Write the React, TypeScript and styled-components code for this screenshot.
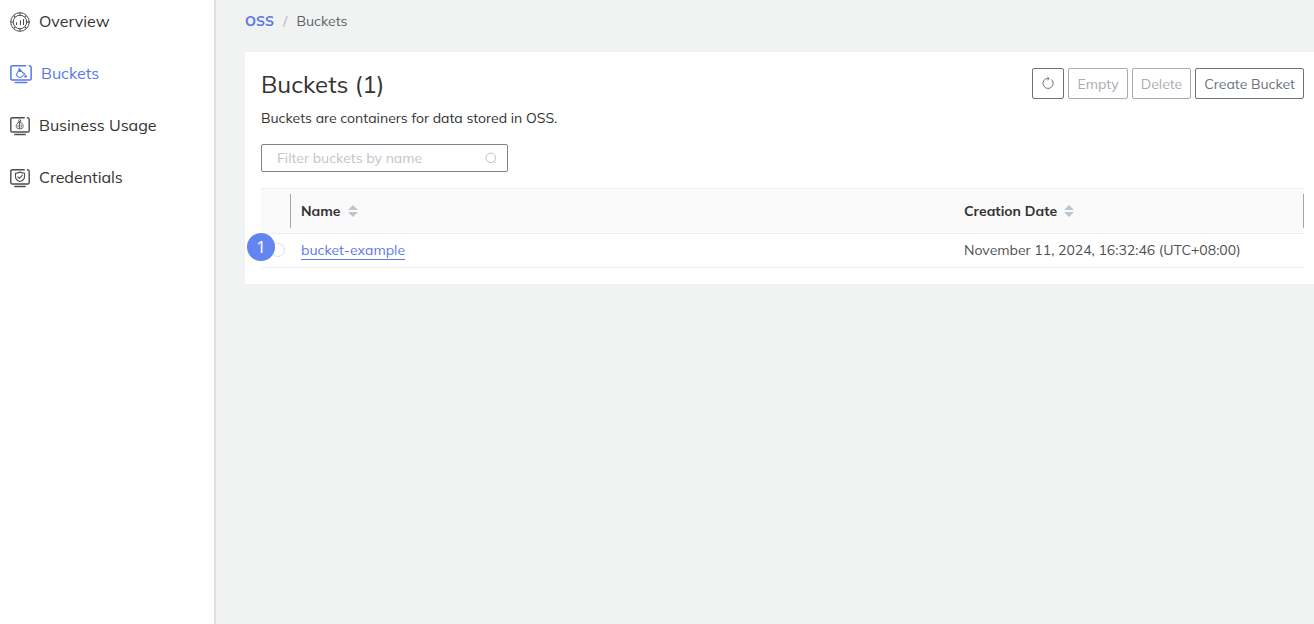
import React, { useState } from "react";
import styled, { createGlobalStyle } from "styled-components";

const color = {
  text: "#333333",
  icon: "#4c4c4c",
  cell: "#4e5054",
  muted: "#606266",
  primary: "#5a78e6",
  line: "#ebeef5",
  control: "#6b747d",
  disabled: "#a8abb2",
  placeholder: "#c0c4cc",
};

const GlobalStyle = createGlobalStyle`
  *, *::before, *::after { box-sizing: border-box; }
  body {
    margin: 0;
    background: #f1f3f2;
    color: ${color.text};
    font: 14px/20px Mulish, Muli, "Noto Sans", sans-serif;
  }
  button, input { font: inherit; }
`;

const Layout = styled.div`
  display: flex;
  min-height: 100vh;
`;

const Sidebar = styled.nav`
  flex: 0 0 216px;
  background: #fff;
  border-right: 2px solid #dddfe0;
`;

const Menu = styled.ul`
  list-style: none;
  margin: 0;
  padding: 0 10px;
`;

const MenuLink = styled.a<{ $active?: boolean }>`
  display: flex;
  align-items: center;
  gap: 9px;
  height: 44px;
  margin-bottom: 8px;
  font-size: 16px;
  text-decoration: none;
  color: ${(p) => (p.$active ? color.primary : color.text)};

  svg {
    color: ${(p) => (p.$active ? color.primary : color.icon)};
  }
`;

const MenuLabel = styled.span`
  padding-bottom: 2px;
`;

const MenuIcon = styled.svg`
  flex: none;
  fill: none;
  stroke: currentColor;
  stroke-linecap: round;
  stroke-linejoin: round;
`;

const Main = styled.main`
  flex: 1;
  min-width: 0;
  padding-left: 29px;
`;

const Breadcrumb = styled.nav`
  display: flex;
  align-items: center;
  gap: 9px;
  height: 42px;
  margin-bottom: 10px;
  color: ${color.muted};
`;

const Crumb = styled.a`
  color: ${color.primary};
  font-weight: 700;
  text-decoration: none;
`;

const Slash = styled.span`
  color: ${color.placeholder};
  font-weight: 700;
`;

const Panel = styled.section`
  padding: 16px 10px 16px 16px;
  background: #fff;
`;

const PanelHeader = styled.header`
  display: flex;
  justify-content: space-between;
  align-items: flex-start;
  margin-bottom: 8px;
`;

const Title = styled.h1`
  margin: 0;
  font-size: 24px;
  line-height: 32px;
  font-weight: 400;
`;

const Actions = styled.div`
  display: flex;
  gap: 4px;
`;

const Button = styled.button`
  display: inline-flex;
  align-items: center;
  justify-content: center;
  height: 31px;
  min-width: 32px;
  padding: 0 8px;
  background: #fff;
  border: 1px solid ${color.control};
  border-radius: 2px;
  color: ${color.control};
  cursor: pointer;
  &:disabled {
    border-color: ${color.disabled};
    color: ${color.disabled};
    cursor: not-allowed;
  }
`;

const Description = styled.p`
  margin: 0 0 16px;
`;

const SearchBox = styled.label`
  display: flex;
  align-items: center;
  width: 247px;
  height: 28px;
  margin-bottom: 16px;
  padding: 0 10px 0 15px;
  border: 1px solid #808488;
  border-radius: 2px;
  color: ${color.placeholder};
`;

const SearchInput = styled.input`
  flex: 1;
  min-width: 0;
  padding: 0;
  border: 0;
  outline: 0;
  background: transparent;
  color: ${color.text};
  &::placeholder {
    color: ${color.placeholder};
    opacity: 1;
  }
`;

const Table = styled.table`
  width: 100%;
  table-layout: fixed;
  border-collapse: separate;
  border-spacing: 0;
  text-align: left;
`;

const SelectCol = styled.col`
  width: 30px;
`;

const DateCol = styled.col`
  width: 350px;
`;

const HeadCell = styled.th`
  height: 46px;
  padding: 0;
  background: #fafafa;
  border: solid ${color.line};
  border-width: 1px 0;
  font-weight: 700;
`;

const HeadInner = styled.div<{ $divider?: boolean }>`
  display: flex;
  align-items: center;
  gap: 7px;
  height: 34px;
  padding-left: 10px;
  border-right: ${(p) => (p.$divider ? "1px solid #a4a6aa" : "0")};
`;

const SortButton = styled.button`
  display: flex;
  padding: 0;
  border: 0;
  background: transparent;
  color: ${color.placeholder};
  cursor: pointer;
`;

const Cell = styled.td`
  height: 34px;
  padding: 0 0 1px 10px;
  border-bottom: 1px solid ${color.line};
  color: ${color.cell};
`;

const SelectCell = styled(Cell)`
  position: relative;
`;

const Radio = styled.input`
  appearance: none;
  display: block;
  width: 14px;
  height: 14px;
  margin: 0;
  border: 1px solid #dcdfe6;
  border-radius: 50%;
  background: #fff;
  &:checked {
    border: 4px solid ${color.primary};
  }
`;

const StepBadge = styled.span`
  position: absolute;
  top: -1px;
  left: -14px;
  width: 28px;
  height: 28px;
  border-radius: 50%;
  background: #6485f0;
  color: #fff;
  font-family: "Noto Sans", sans-serif;
  font-size: 17px;
  line-height: 28px;
  text-align: center;
`;

const BucketLink = styled.a`
  border-bottom: 1px solid ${color.primary};
  color: ${color.primary};
  text-decoration: none;
`;

const Monitor = ({ width, children }: { width: number; children: React.ReactNode }) => (
  <MenuIcon width={width} height="20" viewBox="0 0 20 20" preserveAspectRatio="none" aria-hidden="true">
    <path strokeWidth="1.4" d="M14.2 1.7H2.6Q.8 1.7.8 3.4v11Q.8 16 2.6 16h14.8q1.8 0 1.8-1.6v-11q0-1.6-1.7-1.7" />
    <path strokeWidth="1.4" d="M4.8 18.5h10.4" />
    {children}
  </MenuIcon>
);

const OverviewIcon = () => (
  <MenuIcon width="20" height="20" viewBox="0 0 20 20" aria-hidden="true">
    <circle cx="10" cy="10" r="9.3" strokeWidth="1" />
    <circle cx="10" cy="10" r="6.8" strokeWidth="1" />
    <path
      strokeWidth="1.1"
      strokeLinecap="butt"
      d="M10 1v2.2M10 16.8V19M1 10h2.2M16.8 10H19M3.7 3.7l1.5 1.5M14.8 14.8l1.5 1.5M3.7 16.3l1.5-1.5M14.8 5.2l1.5-1.5"
    />
    <path strokeWidth="1" strokeLinecap="butt" d="M6.5 10.3V13M10.5 8.3V13M13.5 7v6" />
  </MenuIcon>
);

const BucketsIcon = () => (
  <Monitor width={22}>
    <path strokeWidth="1" d="M8.4 5.8l5 4.2-3.6 3.3q-1 .6-1.9-.1l-1.7-1.6q-.8-.9 0-1.8z" />
    <path strokeWidth="1" fill="currentColor" d="M8.3 4.4v3.2l2.2-.2zM14.1 11.2q1.6 1.8 0 2-1.4-.2 0-2z" />
  </Monitor>
);

const UsageIcon = () => (
  <Monitor width={20}>
    <circle cx="9.7" cy="4.6" r="1" strokeWidth=".8" />
    <path strokeWidth=".8" d="M8.3 6.3h2.8q2.4 2.3 2.2 4.3-.5 2.4-3.6 2.4t-3.6-2.4q-.2-2 2.2-4.3z" />
    <path strokeWidth="1" d="M9.7 6v6.5" />
    <path strokeWidth=".7" d="M8 9v2M11.4 9v2" />
  </Monitor>
);

const CredentialsIcon = () => (
  <Monitor width={20}>
    <path strokeWidth="1.1" d="M10 4q2 1.2 4.5 1.2v3.5q0 3.3-4.5 4.8-4.5-1.5-4.5-4.8V5.2Q8 5.2 10 4z" />
    <path strokeWidth="1.1" d="M7.8 8.9l1.5 1.5 3-3" />
  </Monitor>
);

const RefreshIcon = () => (
  <svg width="14" height="16" viewBox="0 0 14 16" fill="none" stroke="currentColor" aria-hidden="true">
    <path d="M10.3 3.4A5.1 5.1 0 1 1 4.4 3L7.6 2.4" />
    <path d="M6.3.6l1.6 1.7-1.1 2" />
  </svg>
);

const SearchIcon = () => (
  <svg width="12" height="12" viewBox="0 0 12 12" fill="none" stroke="currentColor" aria-hidden="true">
    <circle cx="5.8" cy="5.8" r="4.8" />
    <path d="M9 9.2l2 2" />
  </svg>
);

const Sort = ({ column }: { column: string }) => (
  <SortButton type="button" aria-label={`Sort by ${column}`}>
    <svg width="10" height="12" viewBox="0 0 10 12" fill="currentColor" aria-hidden="true">
      <path d="M5 0l5 5H0zM5 12l5-5H0z" />
    </svg>
  </SortButton>
);

const menu = [
  { label: "Overview", Icon: OverviewIcon },
  { label: "Buckets", Icon: BucketsIcon, active: true },
  { label: "Business Usage", Icon: UsageIcon },
  { label: "Credentials", Icon: CredentialsIcon },
];

const buckets = [{ name: "bucket-example", created: "November 11, 2024, 16:32:46 (UTC+08:00)" }];

export default function App() {
  const [filter, setFilter] = useState("");
  const [selected, setSelected] = useState("");
  const rows = buckets.filter((b) => b.name.includes(filter));

  return (
    <Layout>
      <GlobalStyle />
      <Sidebar aria-label="Main">
        <Menu>
          {menu.map(({ label, Icon, active }) => (
            <li key={label}>
              <MenuLink href="#" $active={active} aria-current={active ? "page" : undefined}>
                <Icon />
                <MenuLabel>{label}</MenuLabel>
              </MenuLink>
            </li>
          ))}
        </Menu>
      </Sidebar>
      <Main>
        <Breadcrumb aria-label="Breadcrumb">
          <Crumb href="#">OSS</Crumb>
          <Slash>/</Slash>
          <span>Buckets</span>
        </Breadcrumb>
        <Panel>
          <PanelHeader>
            <Title>Buckets ({buckets.length})</Title>
            <Actions>
              <Button type="button" aria-label="Refresh">
                <RefreshIcon />
              </Button>
              <Button type="button" disabled={!selected}>Empty</Button>
              <Button type="button" disabled={!selected}>Delete</Button>
              <Button type="button">Create Bucket</Button>
            </Actions>
          </PanelHeader>
          <Description>Buckets are containers for data stored in OSS.</Description>
          <SearchBox>
            <SearchInput
              aria-label="Filter buckets by name"
              placeholder="Filter buckets by name"
              value={filter}
              onChange={(e) => setFilter(e.target.value)}
            />
            <SearchIcon />
          </SearchBox>
          <Table>
            <colgroup>
              <SelectCol />
              <col />
              <DateCol />
            </colgroup>
            <thead>
              <tr>
                <HeadCell aria-label="Select">
                  <HeadInner $divider />
                </HeadCell>
                <HeadCell>
                  <HeadInner>Name <Sort column="name" /></HeadInner>
                </HeadCell>
                <HeadCell>
                  <HeadInner $divider>Creation Date <Sort column="creation date" /></HeadInner>
                </HeadCell>
              </tr>
            </thead>
            <tbody>
              {rows.map((b, i) => (
                <tr key={b.name}>
                  <SelectCell>
                    <Radio
                      type="radio"
                      name="bucket"
                      aria-label={b.name}
                      checked={selected === b.name}
                      onChange={() => setSelected(b.name)}
                    />
                    <StepBadge>{i + 1}</StepBadge>
                  </SelectCell>
                  <Cell>
                    <BucketLink href="#">{b.name}</BucketLink>
                  </Cell>
                  <Cell>{b.created}</Cell>
                </tr>
              ))}
            </tbody>
          </Table>
        </Panel>
      </Main>
    </Layout>
  );
}
